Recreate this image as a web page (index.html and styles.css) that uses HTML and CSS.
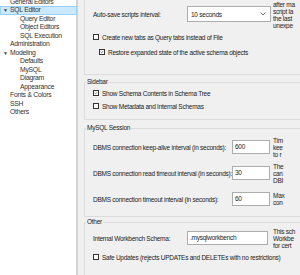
FILE: index.html
```html
<!DOCTYPE html>
<html>
<head>
<meta charset="utf-8">
<link rel="stylesheet" href="styles.css">
</head>
<body>
<div class="app">
  <nav class="tree">
    <div class="item l0">General Editors</div>
    <div class="item l0 selected"><span class="tri">&#9660;</span>SQL Editor</div>
    <div class="item l1">Query Editor</div>
    <div class="item l1">Object Editors</div>
    <div class="item l1">SQL Execution</div>
    <div class="item l0">Administration</div>
    <div class="item l0"><span class="tri">&#9660;</span>Modeling</div>
    <div class="item l1">Defaults</div>
    <div class="item l1">MySQL</div>
    <div class="item l1">Diagram</div>
    <div class="item l1">Appearance</div>
    <div class="item l0">Fonts &amp; Colors</div>
    <div class="item l0">SSH</div>
    <div class="item l0">Others</div>
  </nav>
  <main class="main">
    <section class="group first">
      <div class="row r-auto">
        <span class="label">Auto-save scripts interval:</span>
        <div class="select wide"><span>10 seconds</span>
          <svg class="chev" width="6" height="4" viewBox="0 0 6 4"><path d="M0.5 0.5 L3 3 L5.5 0.5" fill="none" stroke="#555" stroke-width="0.8"/></svg>
        </div>
        <div class="desc"><div>after ma</div><div>script la</div><div>the last</div><div>unexpe</div></div>
      </div>
      <label class="check c1"><span class="box"></span>Create new tabs as Query tabs instead of File</label>
      <label class="check c2 indent"><span class="box on"><svg width="6" height="6" viewBox="0 0 6 6"><path d="M1 3 L2.4 4.4 L5 1.4" fill="none" stroke="#333" stroke-width="0.8"/></svg></span>Restore expanded state of the active schema objects</label>
    </section>

    <fieldset class="group sidebar">
      <legend>Sidebar</legend>
      <label class="check s1"><span class="box on"><svg width="6" height="6" viewBox="0 0 6 6"><path d="M1 3 L2.4 4.4 L5 1.4" fill="none" stroke="#333" stroke-width="0.8"/></svg></span>Show Schema Contents in Schema Tree</label>
      <label class="check s2"><span class="box"></span>Show Metadata and Internal Schemas</label>
    </fieldset>

    <fieldset class="group session">
      <legend>MySQL Session</legend>
      <div class="row r-num">
        <span class="label">DBMS connection keep-alive interval (in seconds):</span>
        <div class="input num">600</div>
        <div class="desc"><div>Tim</div><div>kee</div><div>to r</div></div>
      </div>
      <div class="row r-num">
        <span class="label">DBMS connection read timeout interval (in seconds):</span>
        <div class="input num">30</div>
        <div class="desc"><div>The</div><div>can</div><div>DBI</div></div>
      </div>
      <div class="row r-num">
        <span class="label">DBMS connection timeout interval (in seconds):</span>
        <div class="input num">60</div>
        <div class="desc"><div>Max</div><div>con</div></div>
      </div>
    </fieldset>

    <fieldset class="group other">
      <legend>Other</legend>
      <div class="row r-schema">
        <span class="label">Internal Workbench Schema:</span>
        <div class="input schema">.mysqlworkbench</div>
        <div class="desc"><div>This sch</div><div>Workbe</div><div>for cert</div></div>
      </div>
      <label class="check o1"><span class="box"></span>Safe Updates (rejects UPDATEs and DELETEs with no restrictions)</label>
    </fieldset>
  </main>
</div>
</body>
</html>
```

FILE: styles.css
```css
html, body {
  margin: 0;
  padding: 0;
  width: 300px;
  height: 275px;
  overflow: hidden;
  background: #f0f0f0;
}
body {
  font-family: "Liberation Sans", Arial, sans-serif;
  font-size: 6.5px;
  letter-spacing: -0.25px;
  color: #1a1a1a;
}
.app {
  display: flex;
  height: 275px;
}
.tree {
  width: 76px;
  flex: none;
  background: #ffffff;
  border-right: 2px solid #d4d4d4;
  margin-top: -2.5px;
  color: #333;
  font-size: 6.8px;
}
.item {
  height: 8.5px;
  line-height: 8.5px;
  white-space: nowrap;
  position: relative;
  box-sizing: border-box;
}
.l0 { padding-left: 10px; }
.l1 { padding-left: 20px; }
.tri {
  position: absolute;
  left: 3px;
  font-size: 5px;
  color: #444;
}
.selected {
  background: #cce8ff;
  border: 1px solid #99d1ff;
  margin-right: -1px;
  line-height: 6.5px;
  padding-left: 9px;
}
.selected .tri { left: 2px; }

.main {
  flex: none;
  width: 260px;
  padding-left: 6px;
}
.group {
  width: 258px;
  box-sizing: border-box;
  border: 1px solid #dcdcdc;
  margin: 0;
  padding: 0 8px;
  min-width: 0;
}
fieldset.group legend {
  padding: 0 1px;
  margin-left: -7px;
  line-height: 8px;
  color: #222;
}
.group.first {
  margin-top: -10px;
  height: 85px;
  padding-top: 12px;
}
.row {
  display: flex;
  align-items: center;
}
.label {
  flex: 1;
  min-width: 0;
  white-space: nowrap;
}
.desc {
  flex: none;
  width: 60px;
  margin-left: 2px;
  line-height: 7px;
  white-space: nowrap;
  overflow: hidden;
  color: #222;
}
.r-auto { height: 16px; margin-top: 3px; }
.r-auto .desc { margin-top: 2px; }
.select {
  flex: none;
  height: 16px;
  box-sizing: border-box;
  background: #fff;
  border: 1px solid #adadad;
  display: flex;
  align-items: center;
  justify-content: space-between;
  padding: 0 4px 0 3px;
}
.select.wide { width: 84px; }
.chev { flex: none; }
.input {
  flex: none;
  box-sizing: border-box;
  background: #fff;
  border: 1px solid #adadad;
  height: 14px;
  line-height: 12px;
  padding-left: 2px;
}
.input.num { width: 38px; }
.input.schema { width: 81px; margin-right: 3px; }
.check {
  display: flex;
  align-items: center;
  height: 10px;
  white-space: nowrap;
}
.box {
  flex: none;
  width: 6px;
  height: 6px;
  border: 1px solid #333;
  background: #fff;
  margin-right: 3px;
  box-sizing: border-box;
  display: flex;
  align-items: center;
  justify-content: center;
  overflow: hidden;
}
.box svg { display: block; }
.indent { padding-left: 6px; }
.c1 { margin-top: 10px; }
.c2 { margin-top: 5px; }

.sidebar {
  margin-top: 3px;
  height: 42px;
  padding-top: 0;
}
.s1 { margin-top: 2px; }
.s2 { margin-top: 3px; }

.session {
  margin-top: 4px;
  height: 93px;
}
.r-num { height: 26px; }
.session .r-num:first-of-type { margin-top: 2px; }
.r-num .desc { margin-left: 3px; }

.other {
  margin-top: 1px;
  height: 60px;
}
.r-schema { height: 16px; margin-top: 4px; }
.o1 { margin-top: 6px; }
```
